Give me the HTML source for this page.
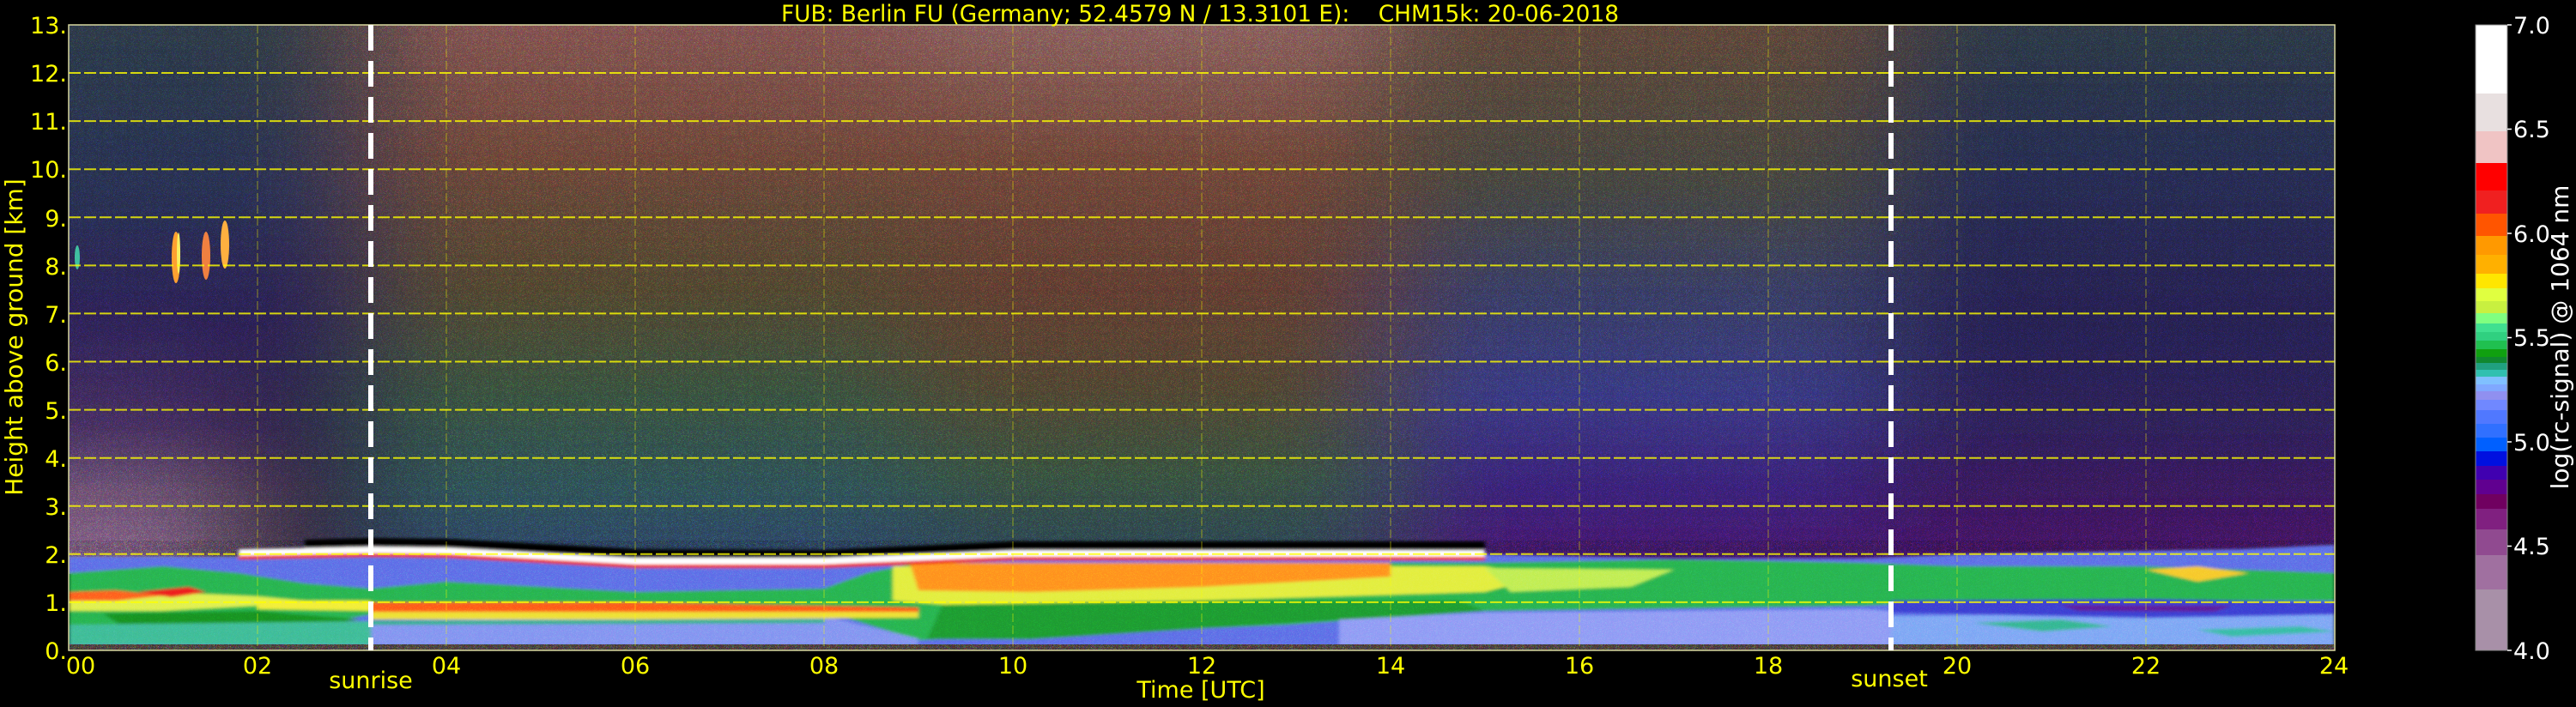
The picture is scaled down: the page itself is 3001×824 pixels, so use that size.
<!DOCTYPE html>
<html><head><meta charset="utf-8"><style>
html,body{margin:0;padding:0;background:#000;width:3001px;height:824px;overflow:hidden}
svg{display:block}
text{font-family:"DejaVu Sans","Liberation Sans",sans-serif}
</style></head><body>
<svg width="3001" height="824" viewBox="0 0 3001 824" xmlns="http://www.w3.org/2000/svg">
<defs>
<clipPath id="pc"><rect x="80" y="29" width="2640" height="729"/></clipPath>
<filter id="hb" x="-10%" y="0" width="120%" height="100%"><feGaussianBlur stdDeviation="70 0"/></filter>
<filter id="sb"><feGaussianBlur stdDeviation="2 1.5"/></filter>
<filter id="nz" x="0" y="0" width="100%" height="100%">
<feTurbulence type="turbulence" baseFrequency="0.95" numOctaves="1" seed="3"/>
<feColorMatrix type="matrix" values="4 0 0 0 -1  0 4 0 0 -1  0 0 4 0 -1  0 0 0 0 1"/>
</filter>
<linearGradient id="gA1" x1="0" y1="29" x2="0" y2="646" gradientUnits="userSpaceOnUse">
<stop offset="0" stop-color="#3a4c5e"/><stop offset="0.3" stop-color="#34406a"/><stop offset="0.55" stop-color="#3a2c70"/><stop offset="0.75" stop-color="#5a3c7c"/><stop offset="0.88" stop-color="#8a6a8e"/><stop offset="1" stop-color="#9a7c9c"/></linearGradient>
<linearGradient id="gA2" x1="0" y1="29" x2="0" y2="646" gradientUnits="userSpaceOnUse">
<stop offset="0" stop-color="#3e4e58"/><stop offset="0.3" stop-color="#36406a"/><stop offset="0.55" stop-color="#34286a"/><stop offset="0.8" stop-color="#3a2a5a"/><stop offset="1" stop-color="#40304a"/></linearGradient>
<linearGradient id="gB" x1="0" y1="29" x2="0" y2="646" gradientUnits="userSpaceOnUse">
<stop offset="0" stop-color="#9a6c68"/><stop offset="0.25" stop-color="#8a5c4a"/><stop offset="0.5" stop-color="#6a5c3e"/><stop offset="0.7" stop-color="#4a6a52"/><stop offset="0.88" stop-color="#3c6a72"/><stop offset="1" stop-color="#3a5a84"/></linearGradient>
<linearGradient id="gC" x1="0" y1="29" x2="0" y2="646" gradientUnits="userSpaceOnUse">
<stop offset="0" stop-color="#a07c78"/><stop offset="0.25" stop-color="#8c5c4a"/><stop offset="0.5" stop-color="#7e5040"/><stop offset="0.68" stop-color="#6a5a40"/><stop offset="0.85" stop-color="#4a6a52"/><stop offset="1" stop-color="#3a5a6c"/></linearGradient>
<linearGradient id="gD" x1="0" y1="29" x2="0" y2="646" gradientUnits="userSpaceOnUse">
<stop offset="0" stop-color="#7a5c4a"/><stop offset="0.3" stop-color="#5a5a52"/><stop offset="0.5" stop-color="#4a5080"/><stop offset="0.7" stop-color="#4a4a9a"/><stop offset="0.88" stop-color="#4c2a92"/><stop offset="1" stop-color="#5a208a"/></linearGradient>
<linearGradient id="gE" x1="0" y1="29" x2="0" y2="646" gradientUnits="userSpaceOnUse">
<stop offset="0" stop-color="#3a4a5a"/><stop offset="0.3" stop-color="#30386a"/><stop offset="0.55" stop-color="#302a6a"/><stop offset="0.75" stop-color="#3a2a72"/><stop offset="0.88" stop-color="#4a2078"/><stop offset="1" stop-color="#5a1a82"/></linearGradient>
</defs>

<rect width="3001" height="824" fill="#000"/>

<g clip-path="url(#pc)">
 <g filter="url(#hb)">
  <rect x="-100" y="29" width="460" height="640" fill="url(#gA1)"/>
  <rect x="270" y="29" width="162" height="640" fill="url(#gA2)"/>
  <rect x="432" y="29" width="638" height="640" fill="url(#gB)"/>
  <rect x="1070" y="29" width="550" height="640" fill="url(#gC)"/>
  <rect x="1620" y="29" width="583" height="640" fill="url(#gD)"/>
  <rect x="2203" y="29" width="700" height="640" fill="url(#gE)"/>
 </g>
 <rect x="80" y="29" width="2640" height="620" filter="url(#nz)" opacity="0.3" style="mix-blend-mode:overlay"/>

 <g filter="url(#sb)">
  <polygon fill="#6c80ea" points="80,649 278,649 278,643 432,640 520,642 740,655 960,655 1180,646 1730,646 1950,651 2170,651 2280,646 2500,642 2610,640 2720,635 2720,758 80,758"/>
  <polygon fill="#2fbd5c" points="80,668 190,660 278,668 355,680 432,686 520,678 630,684 740,690 960,686 1010,668 1070,656 1730,656 1950,652 2170,656 2280,660 2500,660 2720,668 2720,700 2280,700 2170,706 1730,712 1500,728 1070,746 960,712 432,716 300,740 80,740"/>
  <polygon fill="#1aa028" points="120,715 300,712 420,722 300,738 150,735"/>
  <polygon fill="#22a838" points="1100,700 1700,700 1730,712 1500,726 1200,745 1080,745"/>
  <polygon fill="#48c4a4" points="80,728 432,724 432,752 80,752"/>
  <polygon fill="#92a2f2" points="432,724 700,720 960,718 1070,744 1070,752 432,752"/>
  <polygon fill="#9ea8f6" points="1560,722 1730,714 2170,710 2203,712 2203,752 1560,752"/>
  <polygon fill="#8eb2f6" points="2203,718 2720,712 2720,752 2203,752"/>
  <polygon fill="#3ebfa0" points="2300,726 2400,722 2460,730 2380,736"/>
  <polygon fill="#40c4b0" points="2560,734 2680,730 2720,736 2600,742"/>
  <polygon fill="#4448d8" points="2203,700 2500,698 2720,702 2720,716 2500,720 2203,714"/>
  <polygon fill="#6a20a8" points="2400,705 2600,706 2580,713 2420,712"/>
  <polygon fill="#e4f25a" points="80,696 190,690 300,695 355,700 300,706 190,712 80,712"/>
  <polygon fill="#ff7020" points="80,690 135,688 190,694 135,700 80,700"/>
  <polygon fill="#f02020" points="160,690 220,684 240,690 200,696"/>
  <polygon fill="#f4f040" points="300,700 432,700 432,712 300,710"/>
  <polygon fill="#ff6a1c" points="432,702 740,702 960,706 1070,708 1070,714 960,713 740,714 432,714"/>
  <polygon fill="#f0e43c" points="432,713 1070,713 1070,720 740,722 432,722"/>
  <polygon fill="#2cbc8a" points="432,724 960,722 960,726 432,728"/>
  <polygon fill="#e6f048" points="1040,660 1730,660 1800,672 1730,690 1400,700 1100,705 1040,700"/>
  <polygon fill="#ffa024" points="1060,656 1620,656 1620,672 1400,684 1200,690 1070,688"/>
  <polygon fill="#c8f060" points="1730,662 1950,664 1900,684 1760,690"/>
  <polygon fill="#f8d030" points="2500,664 2560,660 2620,668 2560,678"/>
  <polyline fill="none" stroke="#000" stroke-width="12" points="355,635 432,633 520,634 740,646 960,647 1180,637 1400,637 1620,637 1730,637"/>
  <polyline fill="none" stroke="#f02020" stroke-width="4" points="278,650 432,647 520,648 740,660 960,660 1180,651 1400,651 1620,651 1730,651"/>
  <polyline fill="none" stroke="#fff" stroke-width="8" points="278,644 432,641 520,642 740,654 960,654 1180,645 1400,645 1620,645 1730,645"/>
 </g>
 <rect x="80" y="630" width="2640" height="121" filter="url(#nz)" opacity="0.15" style="mix-blend-mode:overlay"/>
 <rect x="80" y="751" width="2640" height="7" fill="#6a5a52"/>
 <rect x="80" y="751" width="2640" height="7" filter="url(#nz)" opacity="0.4"/>
 <ellipse cx="205" cy="300" rx="5" ry="30" fill="#ffa030"/>
 <ellipse cx="208" cy="295" rx="2" ry="24" fill="#f8f060"/>
 <ellipse cx="240" cy="298" rx="5" ry="28" fill="#f08040"/>
 <ellipse cx="262" cy="285" rx="5" ry="28" fill="#ffb040"/>
 <ellipse cx="90" cy="300" rx="3" ry="14" fill="#40c0a0"/>
</g>

<g stroke="#ffff00" stroke-width="2" stroke-dasharray="14 4" opacity="0.8">
 <line x1="80" x2="2720" y1="701.9" y2="701.9"/><line x1="80" x2="2720" y1="645.8" y2="645.8"/>
 <line x1="80" x2="2720" y1="589.8" y2="589.8"/><line x1="80" x2="2720" y1="533.7" y2="533.7"/>
 <line x1="80" x2="2720" y1="477.6" y2="477.6"/><line x1="80" x2="2720" y1="421.5" y2="421.5"/>
 <line x1="80" x2="2720" y1="365.4" y2="365.4"/><line x1="80" x2="2720" y1="309.4" y2="309.4"/>
 <line x1="80" x2="2720" y1="253.3" y2="253.3"/><line x1="80" x2="2720" y1="197.2" y2="197.2"/>
 <line x1="80" x2="2720" y1="141.1" y2="141.1"/><line x1="80" x2="2720" y1="85.0" y2="85.0"/>
</g>
<g stroke="#ffff00" stroke-width="1.2" stroke-dasharray="10 4" opacity="0.4">
 <line y1="29" y2="758" x1="300" x2="300"/><line y1="29" y2="758" x1="520" x2="520"/>
 <line y1="29" y2="758" x1="740" x2="740"/><line y1="29" y2="758" x1="960" x2="960"/>
 <line y1="29" y2="758" x1="1180" x2="1180"/><line y1="29" y2="758" x1="1400" x2="1400"/>
 <line y1="29" y2="758" x1="1620" x2="1620"/><line y1="29" y2="758" x1="1840" x2="1840"/>
 <line y1="29" y2="758" x1="2060" x2="2060"/><line y1="29" y2="758" x1="2280" x2="2280"/>
 <line y1="29" y2="758" x1="2500" x2="2500"/>
</g>
<rect x="80" y="29" width="2640" height="729" fill="none" stroke="#d8d8a0" stroke-width="1.5"/>
<line x1="432" x2="432" y1="29" y2="758" stroke="#fff" stroke-width="6" stroke-dasharray="30 12"/>
<line x1="2203" x2="2203" y1="29" y2="758" stroke="#fff" stroke-width="6" stroke-dasharray="30 12"/>

<g fill="#ffff00" font-size="27">
 <text x="1398" y="25" text-anchor="middle" textLength="976" lengthAdjust="spacingAndGlyphs">FUB: Berlin FU (Germany; 52.4579 N / 13.3101 E):&#160;&#160;&#160;&#160;CHM15k: 20-06-2018</text>
 <g text-anchor="end">
  <text x="78" y="768">0.</text><text x="78" y="712">1.</text><text x="78" y="656">2.</text>
  <text x="78" y="600">3.</text><text x="78" y="544">4.</text><text x="78" y="488">5.</text>
  <text x="78" y="432">6.</text><text x="78" y="376">7.</text><text x="78" y="320">8.</text>
  <text x="78" y="264">9.</text><text x="78" y="207">10.</text><text x="78" y="151">11.</text>
  <text x="78" y="95">12.</text><text x="78" y="39">13.</text>
 </g>
 <g text-anchor="middle">
  <text x="94" y="785">00</text><text x="300" y="785">02</text><text x="520" y="785">04</text>
  <text x="740" y="785">06</text><text x="960" y="785">08</text><text x="1180" y="785">10</text>
  <text x="1400" y="785">12</text><text x="1620" y="785">14</text><text x="1840" y="785">16</text>
  <text x="2060" y="785">18</text><text x="2280" y="785">20</text><text x="2500" y="785">22</text>
  <text x="2719" y="785">24</text>
  <text x="432" y="802">sunrise</text>
  <text x="2201" y="800">sunset</text>
  <text x="1399" y="813">Time [UTC]</text>
 </g>
 <text transform="translate(26,393) rotate(-90)" text-anchor="middle" font-size="28">Height above ground [km]</text>
</g>

<g>
 <rect x="2884" y="29" width="37" height="80" fill="#ffffff"/>
 <rect x="2884" y="109" width="37" height="44" fill="#e8e0e0"/>
 <rect x="2884" y="153" width="37" height="37" fill="#f0c4c4"/>
 <rect x="2884" y="190" width="37" height="32" fill="#ff0000"/>
 <rect x="2884" y="222" width="37" height="27" fill="#f02020"/>
 <rect x="2884" y="249" width="37" height="26" fill="#ff5500"/>
 <rect x="2884" y="275" width="37" height="22" fill="#ff9900"/>
 <rect x="2884" y="297" width="37" height="22" fill="#ffb000"/>
 <rect x="2884" y="319" width="37" height="17" fill="#ffe600"/>
 <rect x="2884" y="336" width="37" height="15" fill="#e0ff40"/>
 <rect x="2884" y="351" width="37" height="14" fill="#c8f040"/>
 <rect x="2884" y="365" width="37" height="12" fill="#80ff80"/>
 <rect x="2884" y="377" width="37" height="10" fill="#40e090"/>
 <rect x="2884" y="387" width="37" height="10" fill="#30d080"/>
 <rect x="2884" y="397" width="37" height="10" fill="#20c050"/>
 <rect x="2884" y="407" width="37" height="9" fill="#10a010"/>
 <rect x="2884" y="416" width="37" height="7" fill="#108830"/>
 <rect x="2884" y="423" width="37" height="8" fill="#20a080"/>
 <rect x="2884" y="431" width="37" height="8" fill="#30c0b0"/>
 <rect x="2884" y="439" width="37" height="9" fill="#80c0ff"/>
 <rect x="2884" y="448" width="37" height="8" fill="#80a8ff"/>
 <rect x="2884" y="456" width="37" height="10" fill="#9090f0"/>
 <rect x="2884" y="466" width="37" height="12" fill="#7088ff"/>
 <rect x="2884" y="478" width="37" height="16" fill="#5078ff"/>
 <rect x="2884" y="494" width="37" height="16" fill="#3070ff"/>
 <rect x="2884" y="510" width="37" height="16" fill="#0060ff"/>
 <rect x="2884" y="526" width="37" height="17" fill="#0010e0"/>
 <rect x="2884" y="543" width="37" height="16" fill="#4000b0"/>
 <rect x="2884" y="559" width="37" height="17" fill="#600090"/>
 <rect x="2884" y="576" width="37" height="17" fill="#700060"/>
 <rect x="2884" y="593" width="37" height="24" fill="#802080"/>
 <rect x="2884" y="617" width="37" height="30" fill="#904a90"/>
 <rect x="2884" y="647" width="37" height="40" fill="#a070a0"/>
 <rect x="2884" y="687" width="37" height="71" fill="#a890a8"/>
 <rect x="2884" y="29" width="37" height="729" fill="none" stroke="#888" stroke-width="1"/>
 <g stroke="#fff" stroke-width="1.5">
  <line x1="2921" x2="2926" y1="29" y2="29"/><line x1="2921" x2="2926" y1="150.5" y2="150.5"/>
  <line x1="2921" x2="2926" y1="272" y2="272"/><line x1="2921" x2="2926" y1="393.5" y2="393.5"/>
  <line x1="2921" x2="2926" y1="515" y2="515"/><line x1="2921" x2="2926" y1="636.5" y2="636.5"/>
  <line x1="2921" x2="2926" y1="758" y2="758"/>
 </g>
 <g fill="#fff" font-size="27">
  <text x="2928" y="39">7.0</text><text x="2928" y="160">6.5</text><text x="2928" y="282">6.0</text>
  <text x="2928" y="403">5.5</text><text x="2928" y="525">5.0</text><text x="2928" y="646">4.5</text>
  <text x="2928" y="768">4.0</text>
  <text transform="translate(2992,393) rotate(-90)" text-anchor="middle" font-size="28">log(rc-signal) @ 1064 nm</text>
 </g>
</g>
</svg>
</body></html>
